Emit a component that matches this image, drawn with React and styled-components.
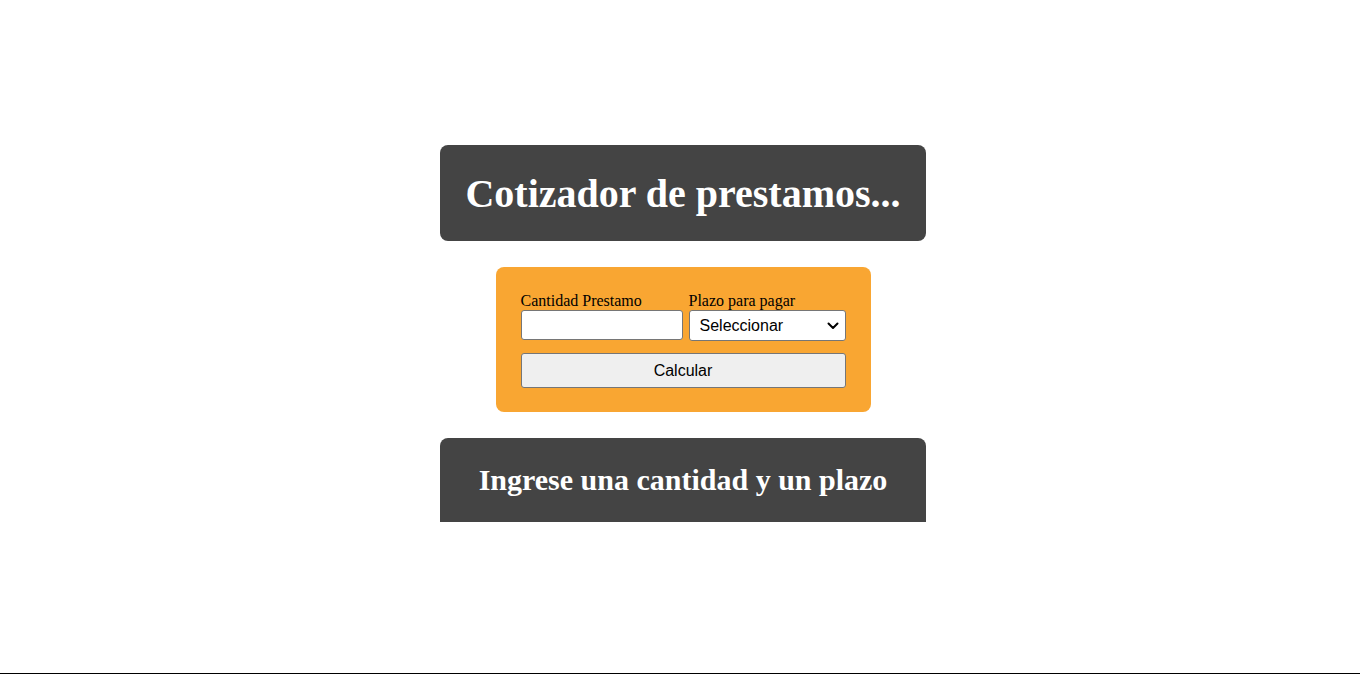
import React from "react";
import styled, { createGlobalStyle } from "styled-components";

const Global = createGlobalStyle`
  html, body { margin: 0; padding: 0; background: #fff; }
  body { font-family: "Liberation Serif", "Times New Roman", serif; }
  * { box-sizing: border-box; }
`;

const Page = styled.div`
  height: 674px;
  border-bottom: 1px solid #000;
  display: flex;
  flex-direction: column;
  align-items: center;
  padding-top: 145px;
  padding-left: 6px;
`;

const Header = styled.header`
  width: 486px;
  height: 96px;
  background: #444444;
  border-radius: 8px;
  display: flex;
  align-items: center;
  justify-content: center;
`;

const Title = styled.h1`
  margin: 0;
  color: #fff;
  font-family: "Liberation Serif", serif;
  font-weight: bold;
  font-size: 40px;
`;

const Card = styled.form`
  margin-top: 26px;
  width: 375px;
  height: 145px;
  background: #f9a632;
  border-radius: 8px;
  padding: 25px 25px 24px;
  display: flex;
  flex-direction: column;
`;

const Row = styled.div`
  display: grid;
  grid-template-columns: 162px 157px;
  column-gap: 6px;
`;

const Field = styled.div`
  display: flex;
  flex-direction: column;
`;

const Label = styled.label`
  font-family: "Liberation Serif", serif;
  font-size: 16px;
  line-height: 18px;
  color: #000;
`;

const Input = styled.input`
  width: 100%;
  height: 30px;
  border: 1px solid #767676;
  border-radius: 3px;
  background: #fff;
  font-family: "Liberation Sans", Arial, sans-serif;
  font-size: 16px;
`;

const SelectWrap = styled.div`
  position: relative;
  width: 100%;
  height: 31px;
`;

const Select = styled.select`
  appearance: none;
  -webkit-appearance: none;
  width: 100%;
  height: 31px;
  border: 1px solid #767676;
  border-radius: 3px;
  background: #fff;
  font-family: "Liberation Sans", Arial, sans-serif;
  font-size: 16px;
  padding: 0 24px 0 10px;
  color: #000;
`;

const Chevron = styled.svg`
  position: absolute;
  right: 7px;
  top: 12px;
  width: 12px;
  height: 8px;
  pointer-events: none;
`;

const Button = styled.button`
  margin-top: 12px;
  width: 325px;
  height: 35px;
  background: #efefef;
  border: 1px solid #767676;
  border-radius: 3px;
  font-family: "Liberation Sans", Arial, sans-serif;
  font-size: 16px;
  color: #000;
`;

const Result = styled.div`
  margin-top: 26px;
  width: 486px;
  height: 84px;
  background: #444444;
  border-radius: 8px 8px 0 0;
  display: flex;
  align-items: center;
  justify-content: center;
`;

const ResultText = styled.h2`
  margin: 0;
  color: #fff;
  font-family: "Liberation Serif", serif;
  font-weight: bold;
  font-size: 30px;
`;

export default function App() {
  return (
    <>
      <Global />
      <Page>
        <Header>
          <Title>Cotizador de prestamos...</Title>
        </Header>
        <Card onSubmit={(e) => e.preventDefault()}>
          <Row>
            <Field>
              <Label>Cantidad Prestamo</Label>
              <Input type="number" />
            </Field>
            <Field>
              <Label>Plazo para pagar</Label>
              <SelectWrap>
                <Select defaultValue="">
                  <option value="">Seleccionar</option>
                  <option value="3">3 meses</option>
                  <option value="6">6 meses</option>
                  <option value="12">12 meses</option>
                  <option value="24">24 meses</option>
                </Select>
                <Chevron viewBox="0 0 12 8">
                  <path d="M1.5 1.5 L6 6 L10.5 1.5" fill="none" stroke="#000" strokeWidth="2" strokeLinecap="round" strokeLinejoin="round" />
                </Chevron>
              </SelectWrap>
            </Field>
          </Row>
          <Button type="submit">Calcular</Button>
        </Card>
        <Result>
          <ResultText>Ingrese una cantidad y un plazo</ResultText>
        </Result>
      </Page>
    </>
  );
}
